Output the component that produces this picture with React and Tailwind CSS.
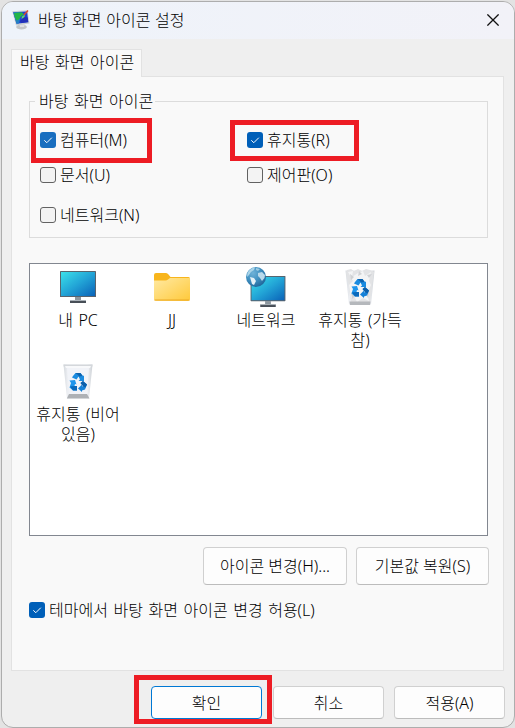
import React, { useState } from 'react';

function MonitorIcon({ className }) {
  return (
    <svg viewBox="0 0 36 32" className={className}>
      <defs>
        <linearGradient id="screen" x1="0" y1="0" x2="1" y2="1">
          <stop offset="0" stopColor="#3be0ea" />
          <stop offset="0.5" stopColor="#22a4d6" />
          <stop offset="1" stopColor="#0a62b8" />
        </linearGradient>
      </defs>
      <rect x="15" y="26" width="6" height="4" fill="#8d979f" />
      <rect x="10" y="29.5" width="16" height="2.5" fill="#474e57" />
      <rect x="10" y="29" width="16" height="1" fill="#aab2b9" />
      <rect x="0" y="0" width="36" height="26" rx="0.6" fill="#59636d" />
      <rect x="1" y="1" width="34" height="24" fill="url(#screen)" />
    </svg>
  );
}

function FolderIcon() {
  return (
    <svg viewBox="0 0 36 28" className="h-7 w-9">
      <defs>
        <linearGradient id="folder" x1="0" y1="0" x2="1" y2="1">
          <stop offset="0" stopColor="#ffe9a2" />
          <stop offset="1" stopColor="#ffc93a" />
        </linearGradient>
      </defs>
      <path d="M0 2Q0 0 2 0H12Q13.500 0 14.500 1.500L16.500 4H34.500Q36 4 36 5.500V12H0Z" fill="#f8b51c" />
      <path d="M0 7.500H11.500Q13 7.500 14 6.500L16 5H36V26Q36 28 34 28H2Q0 28 0 26Z" fill="url(#folder)" />
      <path d="M0.500 27H35.500" stroke="#eba826" strokeWidth="1" />
    </svg>
  );
}

function NetworkIcon() {
  return (
    <div className="relative h-10 w-10">
      <MonitorIcon className="absolute top-[9px] left-1 h-[31px] w-9" />
      <svg viewBox="0 0 20 20" className="absolute top-0 left-0 h-5 w-5">
        <defs>
          <radialGradient id="globe" cx="0.35" cy="0.3" r="0.8">
            <stop offset="0" stopColor="#6fb2d8" />
            <stop offset="0.5" stopColor="#3f8fc0" />
            <stop offset="1" stopColor="#1b5f94" />
          </radialGradient>
        </defs>
        <circle cx="10" cy="10" r="10" fill="url(#globe)" />
        <path d="M1.500 6Q4 1 9 0.500L8 3L5 5L3 8L1 10Z" fill="#a9d3e8" />
        <path d="M10 1L14 2L12 4L10 3Z" fill="#9ccbe2" />
        <path d="M4 10L8 11L10 14L8 18L6 17Z" fill="#e5f1f7" />
        <path d="M12 6L16 5L19 8L18.500 11L16 14L14 11L12 9Z" fill="#b9d9ea" />
      </svg>
    </div>
  );
}

function RecycleBinIcon({ full }) {
  return (
    <svg viewBox="0 0 30 36" className="h-9 w-[30px]">
      <defs>
        <linearGradient id="bin" x1="0" y1="0" x2="1" y2="0">
          <stop offset="0" stopColor="#d6dadf" />
          <stop offset="0.15" stopColor="#eef0f4" />
          <stop offset="0.8" stopColor="#f3f5f8" />
          <stop offset="1" stopColor="#cdd1d6" />
        </linearGradient>
      </defs>
      <path d="M0.500 1.500H29.500L26 35.500H4Z" fill="url(#bin)" />
      {full ? (
        <>
          <path d="M1 4L2 1L6 0L9 2L13 0L17 2L21 0L25 1L29 3L28 9L25 34H6L3 13Z" fill="#e2e3e5" />
          <path d="M3 3L8 2L7 8L13 4L18 2L20 7L26 3L24 12L26 16L22 25L24 32L18 29L12 33L9 27L6 29L4 16L8 12Z" fill="#f3f4f5" />
          <path d="M5 5L9 8L6 11ZM14 2L17 5L13 7ZM22 6L27 5L24 9ZM6 23L10 27L7 30ZM21 25L24 22L23 29Z" fill="#cfd1d4" />
          <path d="M4.500 32.500H25.500L25 36H5Z" fill="#b5b8bc" />
        </>
      ) : (
        <>
          <path d="M4 5H26L23.500 31H6.500Z" fill="#f1f3f8" />
          <path d="M0.500 1.500H29.500L29.300 3.500H0.700Z" fill="#d4d7db" />
          <path d="M2 3H28L27 5H3Z" fill="#f8f9fb" />
          <path d="M6 31H24L26.500 35.500H3.800Z" fill="#aeb1b5" />
        </>
      )}
      <g>
        <path d="M10 13L12.500 10H17.500L20 13L21 12.500V18H15.500L17 16.500L15.500 13.500L13.500 16.500L9 14.500Z" fill="#1a8be0" />
        <path d="M12.500 10H17.500L19.500 13L16 13.500L15 12Z" fill="#0d62ad" />
        <path d="M6.500 17.500L12 17L13.500 21.500L12 21L11.500 23H14V27.500H10L6.500 24.500L8 20Z" fill="#1e95ec" />
        <path d="M7 23.500L11.500 23H14V27.500H10Z" fill="#0a69bb" />
        <path d="M20 18L24 21.500L22 26.500L19 27.500V29L15 25.500L19 21.500V23.500L20 23L17.500 20Z" fill="#1581d8" />
        <path d="M20 18L24 21.500L22.500 24.500L20 23L17.500 20Z" fill="#0c5faa" />
      </g>
    </svg>
  );
}

function TitleIcon() {
  return (
    <svg viewBox="0 0 18 20" className="h-5 w-[18px]">
      <ellipse cx="9.500" cy="17" rx="5.300" ry="2.500" fill="#c3c5c7" />
      <path d="M7 13L13 13.500L12 17H8Z" fill="#dedfe0" />
      <path d="M0.300 1.300L15.500 0.300L17.500 13.500L4 15.500Z" fill="#c6cccf" />
      <path d="M1.200 2.300L15 1.500L16.300 12.300L4.500 13.800Z" fill="#1f3fd6" />
      <path d="M1.200 2.300L8 2L5.500 6.500L8 9L7 13.500L4.500 13.800Z" fill="#2280c4" />
      <path d="M2 3L10 2.300L12 4.500L9 6.500L7 9.500L4.500 10.500L2.800 7Z" fill="#23b548" />
      <path d="M8 11L12 7L15.700 7.500L16.200 12L9 13Z" fill="#2230b8" />
      <path d="M10 6.500L13 4.500L12.500 7L9.500 9Z" fill="#62dd66" />
      <path d="M12 5L16 0.500" stroke="#dc4a2c" strokeWidth="1.500" />
    </svg>
  );
}

function Checkbox({ label, checked, onChange, light }) {
  return (
    <label className="flex h-5 items-center gap-1 whitespace-nowrap">
      <input type="checkbox" className="sr-only" checked={checked} onChange={onChange} />
      {checked ? (
        <span className={`flex h-4 w-4 items-center justify-center rounded-[3px] ${light ? 'bg-[#196ebf]' : 'bg-[#005fb8]'}`}>
          <svg viewBox="0 0 16 16" className="h-4 w-4" fill="none" stroke="#fff" strokeWidth="1">
            <path d="M4.300 8.300L6.800 10.700L11.800 5.700" />
          </svg>
        </span>
      ) : (
        <span className="h-4 w-4 rounded-[3px] border border-[#626262] bg-[#f3f3f3]" />
      )}
      <span>{label}</span>
    </label>
  );
}

function Button({ children, className }) {
  return (
    <button className={`flex items-center justify-center rounded-[4px] border bg-[#fdfdfd] whitespace-nowrap ${className}`}>
      {children}
    </button>
  );
}

// Red frame drawn over the control it points at
function Highlight({ className }) {
  return <span className={`pointer-events-none absolute border-[5px] border-[#ed1c24] ${className}`} />;
}

const icons = [
  { name: ['내 PC'], icon: <MonitorIcon className="h-8 w-9" /> },
  { name: ['JJ'], icon: <FolderIcon /> },
  { name: ['네트워크'], icon: <NetworkIcon /> },
  { name: ['휴지통 (가득', '참)'], icon: <RecycleBinIcon full /> },
  { name: ['휴지통 (비어', '있음)'], icon: <RecycleBinIcon /> },
];

export default function App() {
  const [checks, setChecks] = useState({
    computer: true,
    bin: true,
    docs: false,
    control: false,
    network: false,
    themes: true,
  });

  const toggle = (key) => () => setChecks({ ...checks, [key]: !checks[key] });

  return (
    <div className="h-[728px] w-[515px] overflow-hidden bg-[#e3e3e3] pt-px pl-px font-['Noto_Sans','Noto_Sans_CJK_KR',sans-serif] text-[16px] leading-5 font-light text-black [word-spacing:1.4px]">
      <div className="flex h-[727px] w-[514px] flex-col overflow-hidden rounded-xl border border-[#adadad] bg-[#efefef]">
        <div className="flex h-[37px] shrink-0 items-center bg-linear-to-r from-[#eef3fa] to-[#f2f2f8] pr-[15px] pb-0.5 pl-[10px]">
          <TitleIcon />
          <span className="ml-[8px] flex-1 [word-spacing:0.5px]">바탕 화면 아이콘 설정</span>
          <button aria-label="닫기">
            <svg viewBox="0 0 12 12" className="h-3 w-3" stroke="#111" strokeWidth="1.300">
              <path d="M0.400 0.400L11.600 11.600M11.600 0.400L0.400 11.600" />
            </svg>
          </button>
        </div>

        <div className="flex flex-1 flex-col px-[9px] pt-[10px]">
          <div className="z-10 -mb-px flex h-[28px] w-[131px] items-center border border-b-0 border-[#e2e2e2] bg-[#f9f9f9] pb-1 pl-2 whitespace-nowrap">
            바탕 화면 아이콘
          </div>

          <div className="h-[595px] w-[493px] border border-[#e2e2e2] bg-[#f9f9f9] px-[17px] pt-[14px]">
            <fieldset className="h-[147px] w-[459px]">
              <div className="flex h-5 items-center">
                <span className="h-px w-[6px] bg-[#dcdcdc]" />
                <legend className="pr-0.5 pl-1">바탕 화면 아이콘</legend>
                <span className="h-px flex-1 bg-[#dcdcdc]" />
              </div>
              <div className="-mt-[10px] grid h-[137px] grid-cols-[207px_1fr] grid-rows-[35px_40px_20px] border border-t-0 border-[#dcdcdc] pt-[29px] pl-[10px]">
                <div className="relative">
                  <Checkbox label="컴퓨터(M)" checked={checks.computer} onChange={toggle('computer')} light />
                  <Highlight className="-top-3 -left-[9px] h-[45px] w-[121px]" />
                </div>
                <div className="relative">
                  <Checkbox label="휴지통(R)" checked={checks.bin} onChange={toggle('bin')} />
                  <Highlight className="-top-[10px] -left-[17px] h-[41px] w-[129px]" />
                </div>
                <Checkbox label="문서(U)" checked={checks.docs} onChange={toggle('docs')} />
                <Checkbox label="제어판(O)" checked={checks.control} onChange={toggle('control')} />
                <Checkbox label="네트워크(N)" checked={checks.network} onChange={toggle('network')} />
              </div>
            </fieldset>

            <div className="mt-[25px] grid h-[273px] w-[459px] auto-rows-[94px] grid-cols-[repeat(4,94px)] border border-[#828790] bg-white pt-[3px] pl-px">
              {icons.map((item) => (
                <div key={item.name[0]} className="flex flex-col items-center">
                  <div className="mb-[3px] flex h-10 items-center justify-center">{item.icon}</div>
                  {item.name.map((line) => (
                    <span key={line} className="whitespace-nowrap">{line}</span>
                  ))}
                </div>
              ))}
            </div>

            <div className="mt-[11px] flex h-[38px] w-[460px] justify-end gap-[9px]">
              <Button className="w-[144px] border-[#d0d0d0] border-b-[#bcbcbc]">아이콘 변경(H)...</Button>
              <Button className="w-[133px] border-[#d0d0d0] border-b-[#bcbcbc]">기본값 복원(S)</Button>
            </div>

            <div className="mt-[15px]">
              <Checkbox label="테마에서 바탕 화면 아이콘 변경 허용(L)" checked={checks.themes} onChange={toggle('themes')} />
            </div>
          </div>

          <div className="mt-[15px] flex h-[33px] justify-end gap-[10px]">
            <div className="relative mr-px flex">
              <Button className="w-[111px] border-[#0078d4]">확인</Button>
              <Highlight className="-top-[11px] -left-[17px] h-[49px] w-[138px]" />
            </div>
            <Button className="w-[111px] border-[#d0d0d0] border-b-[#bcbcbc]">취소</Button>
            <Button className="w-[111px] border-[#d0d0d0] border-b-[#bcbcbc]">적용(A)</Button>
          </div>
        </div>
      </div>
    </div>
  );
}
